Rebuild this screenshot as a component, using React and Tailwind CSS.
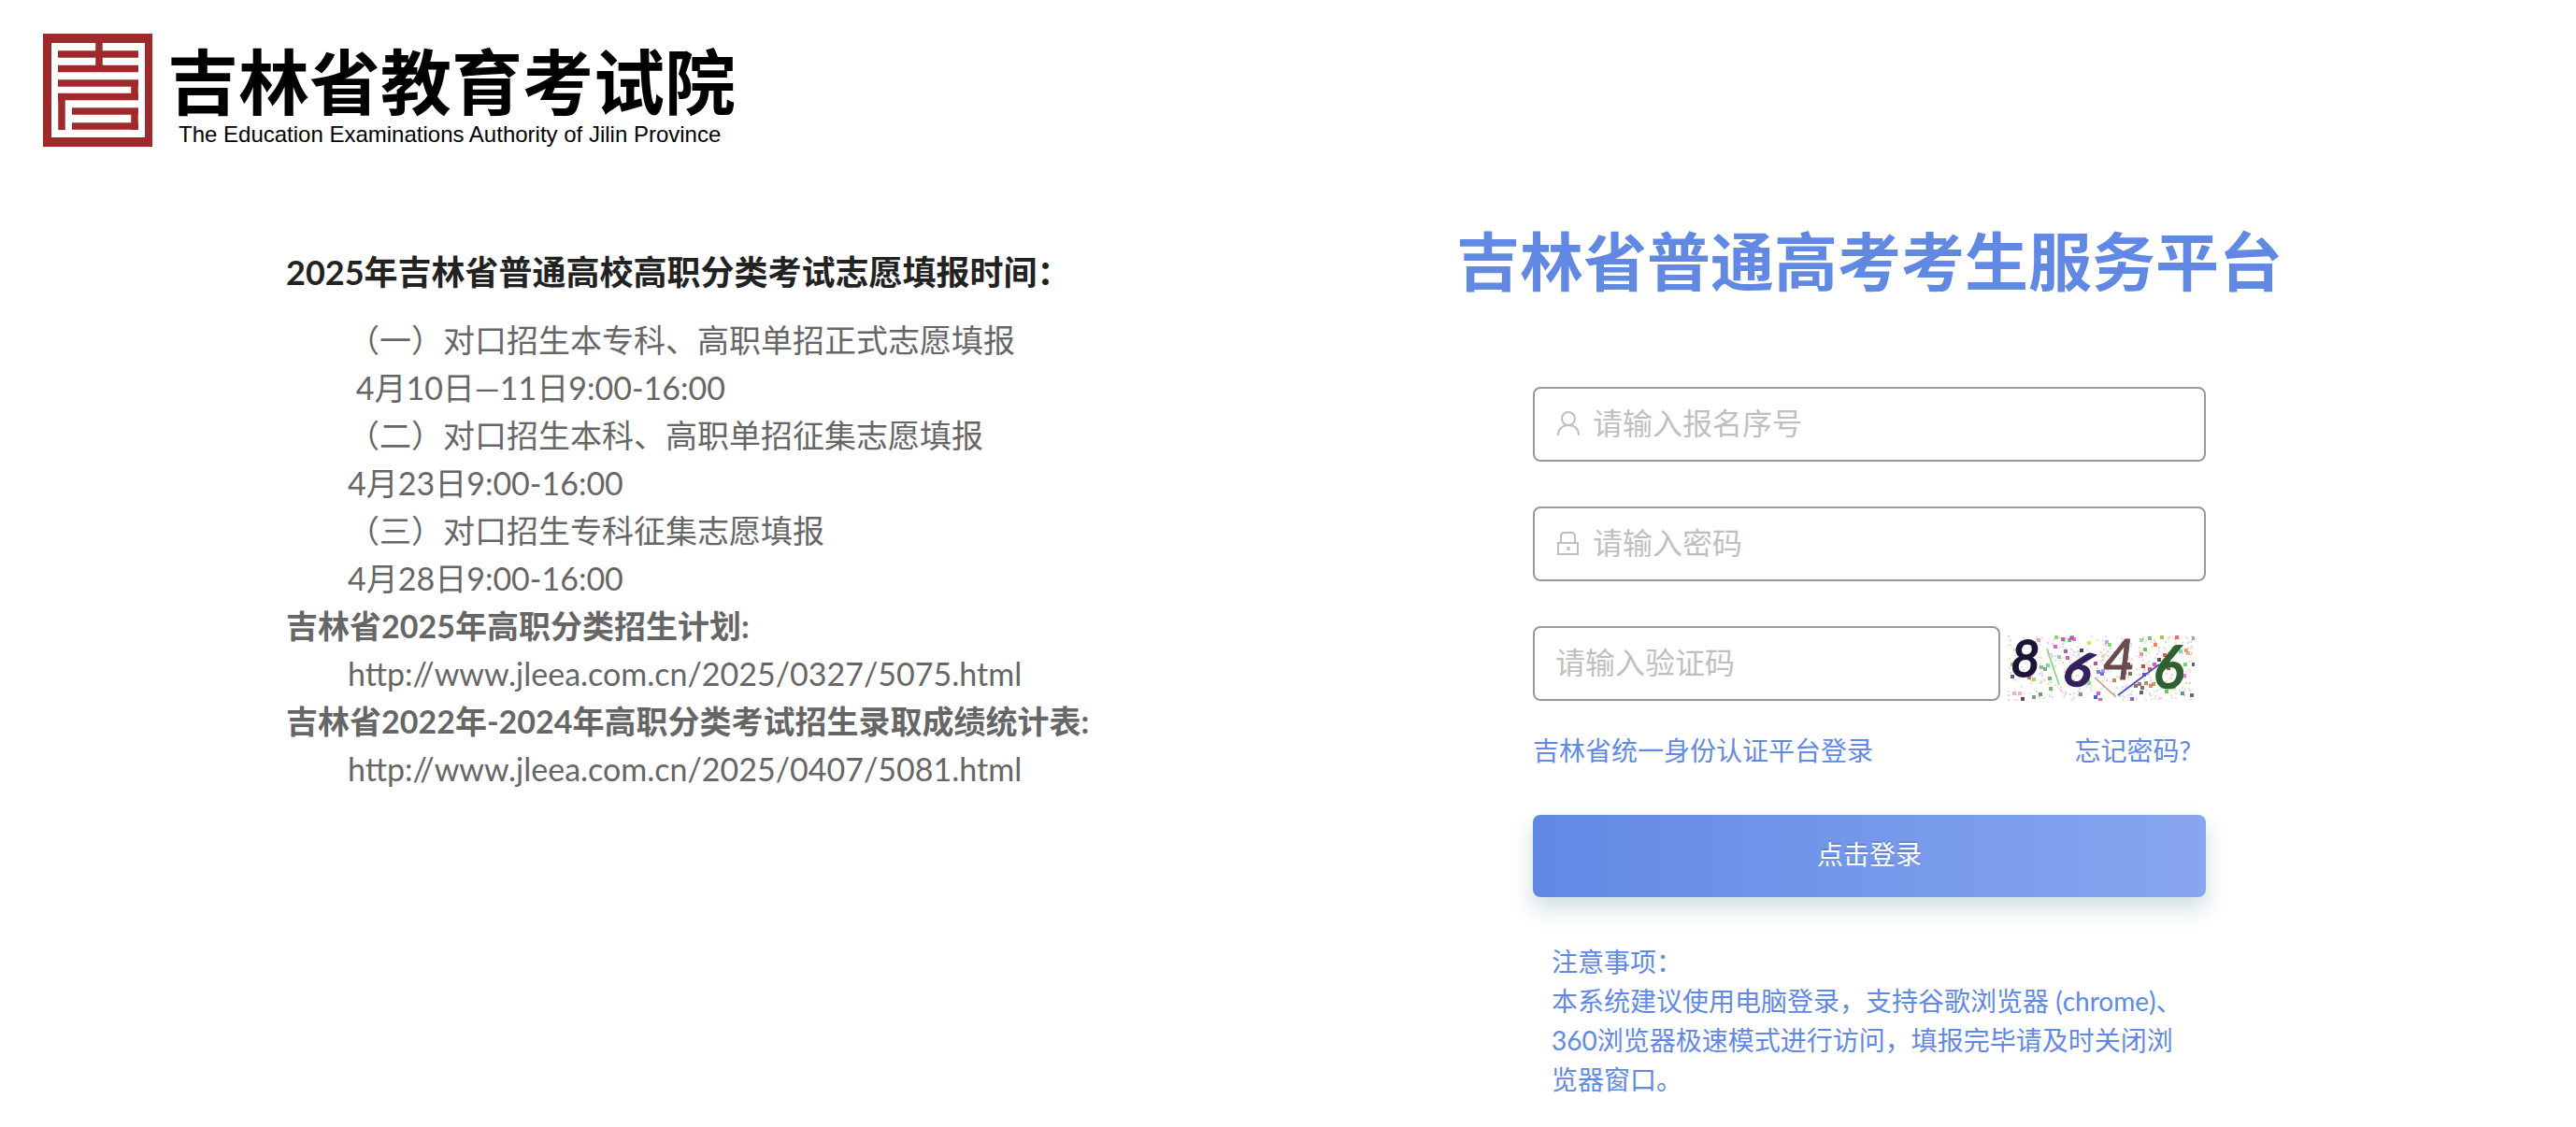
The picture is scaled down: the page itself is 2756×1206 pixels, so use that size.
const schedule = [
  { text: "（一）对口招生本专科、高职单招正式志愿填报" },
  { text: "\u00a04月10日—11日9:00-16:00" },
  { text: "（二）对口招生本科、高职单招征集志愿填报" },
  { text: "4月23日9:00-16:00" },
  { text: "（三）对口招生专科征集志愿填报" },
  { text: "4月28日9:00-16:00" },
  { text: "吉林省2025年高职分类招生计划:", title: true },
  { text: "http://www.jleea.com.cn/2025/0327/5075.html", link: true },
  { text: "吉林省2022年-2024年高职分类考试招生录取成绩统计表:", title: true },
  { text: "http://www.jleea.com.cn/2025/0407/5081.html", link: true },
];

// x, y, color
const dots = [
  [31, 3, "#d98be8"], [58, 3, "#9be08b"], [64, 3, "#4fae4f"], [67, 0, "#4fc04f"], [69, 2, "#e33fd0"],
  [49, 10, "#e832d2"], [50, 0, "#68d050"], [57, 2, "#c43fb4"], [66, 1, "#e032d8"], [3, 29, "#8fb838"],
  [3, 42, "#4b2868"], [24, 36, "#a83068"], [26, 45, "#6fd860"], [21, 43, "#d04848"], [34, 32, "#68b878"],
  [38, 34, "#5f9f5f"], [41, 30, "#58c8b0"], [53, 21, "#8fb888"], [60, 15, "#a038b8"], [62, 22, "#c03890"],
  [43, 44, "#48a858"], [44, 55, "#6f9868"], [14, 66, "#401838"], [26, 64, "#5f8f48"], [33, 61, "#388848"],
  [5, 60, "#e8a0b8"], [77, 14, "#181838"], [85, 6, "#d8d838"], [107, 8, "#68d848"], [104, 5, "#b088e8"],
  [92, 28, "#b02888"], [95, 37, "#5868d8"], [99, 39, "#4848c8"], [100, 36, "#8888e8"], [84, 45, "#58d848"],
  [85, 49, "#68d868"], [76, 61, "#688068"], [92, 64, "#2828f0"], [95, 60, "#e828d8"], [97, 67, "#f028c8"],
  [112, 46, "#c06838"], [129, 39, "#386838"], [131, 66, "#7040c8"], [127, 29, "#283820"], [122, 36, "#c04878"],
  [141, 18, "#e87878"], [145, 13, "#48b848"], [143, 31, "#b01828"], [144, 40, "#482888"], [150, 34, "#c83828"],
  [156, 8, "#f06838"], [155, 29, "#f02890"], [160, 24, "#382038"], [166, 19, "#d83830"], [170, 33, "#982828"],
  [179, 0, "#e84838"], [183, 15, "#48d8a8"], [189, 14, "#e88838"], [191, 17, "#f0a068"], [188, 29, "#48d848"],
  [197, 29, "#303890"], [184, 42, "#d838c8"], [187, 41, "#e868c8"], [176, 53, "#e87888"], [185, 60, "#3878a8"],
  [195, 62, "#285828"], [197, 1, "#7888f0"], [168, 58, "#48b848"], [154, 50, "#b08828"], [139, 50, "#805068"],
  [142, 54, "#684858"], [146, 49, "#a87840"], [151, 52, "#d06858"], [141, 59, "#403858"], [135, 52, "#884838"],
  [163, 0, "#a8a828"], [150, 1, "#58b858"], [141, 3, "#78d8a8"], [11, 60, "#f0a8a8"], [100, 20, "#f0c8b8"],
];

const grain = ["#f9c8c8", "#d8f0c8", "#f8d8f0", "#f8e4bc", "#d8dcf8"];

const Logo = () => (
  <svg viewBox="0 0 117 121" className="h-[121px] w-[117px] shrink-0" aria-hidden="true">
    <path d="M0 0H117V121H0Z" fill="#a02a2b" />
    <path d="M9 10H109V111H9Z" fill="#fff" />
    <g fill="none" stroke="#a02a2b" strokeWidth="7.5">
      <path d="M60 5V38" />
      <path d="M16 22H102M16 37.500H102M16 53H102M98 50V71M102 67.500H16M20 64V103" />
      <path d="M31 83H102M98 80V103M102 99H31" />
    </g>
  </svg>
);

const UserIcon = () => (
  <svg viewBox="0 0 28 28" className="h-7 w-7 shrink-0" fill="none" stroke="#bfbfbf" strokeWidth="2" aria-hidden="true">
    <circle cx="14" cy="8" r="7" />
    <path d="M3 26C3 19.500 7 15 14 15S25 19.500 25 26" />
  </svg>
);

const LockIcon = () => (
  <svg viewBox="0 0 28 28" className="h-7 w-7 shrink-0" fill="none" stroke="#bfbfbf" strokeWidth="2" aria-hidden="true">
    <path d="M3 13H24V25H3ZM6 13V6Q6 2 10 2H17Q21 2 21 6V13" />
    <path d="M14 17V21" strokeWidth="3" />
  </svg>
);

const Captcha = () => (
  <svg viewBox="0 0 200 70" className="h-[70px] w-[200px]" role="img" aria-label="验证码">
    {Array.from({ length: 420 }, (_, i) => (
      <rect
        key={i}
        x={(i * i * 7 + i * 37) % 199}
        y={(i * 29 + ((i * i) % 13) * 5) % 69}
        width="2"
        height="2"
        fill={grain[i % 5]}
      />
    ))}
    {dots.map(([x, y, color], i) => (
      <rect key={i} x={x} y={y} width="4" height="4" fill={color} opacity="0.8" />
    ))}
    <g fill="none" strokeWidth="1.500">
      <path d="M42 14L55 53" stroke="#78d878" />
      <path d="M93 45L116 66" stroke="#c09888" />
      <path d="M118 64L162 31" stroke="#4858c8" strokeWidth="2" />
    </g>
    <g fontFamily="Lato, sans-serif" fontStyle="italic" textAnchor="middle">
      <text x="19" y="44" fontSize="54" fontWeight="400" fill="#1c1438" stroke="#1c1438" strokeWidth="2">8</text>
      <text x="70" y="54" fontSize="54" fontWeight="700" fill="#33205f" stroke="#33205f" transform="rotate(18 70 54)">6</text>
      <text x="119" y="47" fontSize="60" fontWeight="400" fill="#6b4a50" stroke="#6b4a50">4</text>
      <text x="172" y="56" fontSize="62" fontWeight="400" fill="#2f6030" stroke="#2f6030" strokeWidth="2">6</text>
    </g>
  </svg>
);

const Field = ({ id, type = "text", placeholder, icon, className = "" }) => (
  <label
    htmlFor={id}
    className={`flex h-20 items-center gap-3 rounded-lg border-2 border-[#999] px-[22px] ${className}`}
  >
    {icon}
    <input
      id={id}
      type={type}
      placeholder={placeholder}
      aria-label={placeholder}
      className="h-14 w-full min-w-0 bg-transparent pb-1 text-[32px] text-[#333] outline-none placeholder:text-[#bfbfbf]"
    />
  </label>
);

const Header = () => (
  <header className="flex items-start gap-4 px-[46px] pt-9">
    <Logo />
    <div className="pt-[11px] text-black">
      <p className="text-[76px] leading-[81px] font-bold">吉林省教育考试院</p>
      <p className="pl-3 font-['Liberation_Sans',Arial,sans-serif] text-[24px] leading-[32px]">
        The Education Examinations Authority of Jilin Province
      </p>
    </div>
  </header>
);

const Schedule = () => (
  <section className="pl-[306px] text-[34px] leading-[51px] text-[#666]">
    <h2 className="mb-5 text-[36px] leading-[54px] font-bold text-[#222]">
      2025年吉林省普通高校高职分类考试志愿填报时间：
    </h2>
    {schedule.map(({ text, title, link }) => (
      <p key={text} className={title ? "font-bold" : "pl-[66px]"}>
        {link ? <a href={text}>{text}</a> : text}
      </p>
    ))}
  </section>
);

const LoginForm = () => (
  <section className="flex flex-col items-center text-[#6189e4]">
    <h1 className="text-[68px] leading-[100px] font-bold">吉林省普通高考考生服务平台</h1>
    <form className="mt-[84px] w-[720px]" onSubmit={(e) => e.preventDefault()}>
      <div className="flex flex-col gap-12">
        <Field id="number" placeholder="请输入报名序号" icon={<UserIcon />} />
        <Field id="password" type="password" placeholder="请输入密码" icon={<LockIcon />} />
        <div className="flex items-end gap-2">
          <Field id="code" placeholder="请输入验证码" className="w-[500px]" />
          <Captcha />
        </div>
      </div>

      <div className="mt-8 flex justify-between pr-4 text-[28px] leading-[42px]">
        <a href="#sso">吉林省统一身份认证平台登录</a>
        <a href="#forgot">忘记密码?</a>
      </div>

      <button
        type="submit"
        className="mt-12 h-[88px] w-full rounded-lg bg-linear-to-r from-[#6189e4] to-[#88a6ef] pb-1 text-[28px] text-white shadow-[0_12px_24px_rgba(0,90,90,0.2)] text-shadow-[0_-2px_0_rgba(0,0,0,0.12)]"
      >
        点击登录
      </button>

      {/* 注意事项 */}
      <div className="mt-12 px-5 text-[28px] leading-[42px]">
        <p>注意事项：</p>
        <p>
          本系统建议使用电脑登录，支持谷歌浏览器 (chrome)、360浏览器极速模式进行访问，填报完毕请及时关闭浏览器窗口。
        </p>
      </div>
    </form>
  </section>
);

export default function App() {
  return (
    <div className="min-h-screen bg-white font-[Lato,'Noto_Sans_CJK_SC',sans-serif]" lang="zh-CN">
      <Header />
      <main className="mt-[70px] grid grid-cols-[311fr_378fr] items-start">
        <div className="pt-[34px]">
          <Schedule />
        </div>
        <LoginForm />
      </main>
    </div>
  );
}
